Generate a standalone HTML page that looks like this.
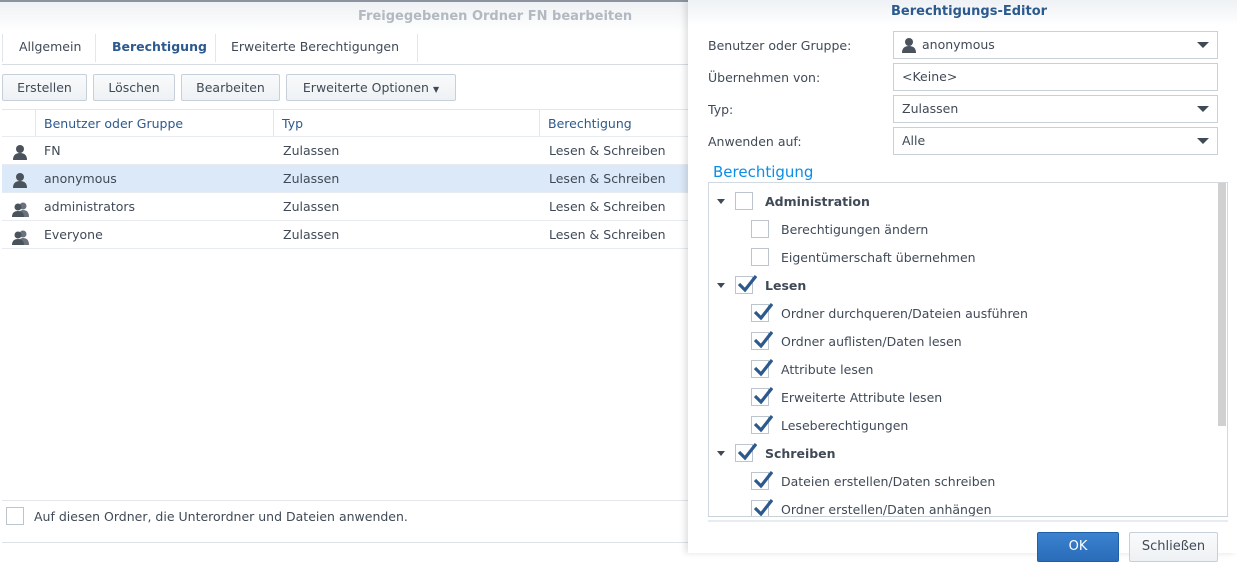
<!DOCTYPE html>
<html><head><meta charset="utf-8"><style>
*{box-sizing:border-box;margin:0;padding:0}
body{width:1237px;height:553px;overflow:hidden;background:#fff;font-family:"DejaVu Sans","Liberation Sans",sans-serif;font-size:12px;color:#404a57;position:relative}
.abs{position:absolute}
.btn{position:absolute;top:74px;height:27px;border:1px solid #c7d0da;border-radius:2px;background:linear-gradient(#f9fafb,#eef1f4);line-height:25px;text-align:center;font-size:12.5px;color:#404a57}
.row{position:absolute;left:2px;width:686px;height:28px;border-bottom:1px solid #e8ecf0;line-height:27px;font-size:12.5px}
.row span{position:absolute}
.fld{position:absolute;left:893px;width:325px;height:28px;border:1px solid #c8d0da;line-height:26px;padding-left:8px;font-size:12.5px}
.lbl{position:absolute;left:708px;font-size:12.5px}
.arr{position:absolute;right:8px;top:10px;width:0;height:0;border-left:6px solid transparent;border-right:6px solid transparent;border-top:6px solid #404a57}
.cb{position:absolute;width:18px;height:18px;border:1px solid #bcc4ce;background:#fff}
.cb svg{position:absolute;left:1px;top:-3px}
.tri{position:absolute;width:0;height:0;border-left:4px solid transparent;border-right:4px solid transparent;border-top:5px solid #404a57}
.t{position:absolute;font-size:12.5px}
</style></head><body>
<!-- left -->
<div class="abs" style="left:0;top:0;width:688px;height:2px;background:#8b949e"></div>
<div class="abs" style="left:0;top:2px;width:688px;height:30px;background:linear-gradient(#eef1f4,#fff)"></div>
<div class="abs" style="left:358px;top:9px;font-weight:bold;font-size:13px;color:#b3b9c0">Freigegebenen Ordner FN bearbeiten</div>
<div class="abs" style="left:2px;top:34px;height:28px;width:1px;background:#e3e7eb"></div>
<div class="abs" style="left:19px;top:39px;font-size:12.5px">Allgemein</div>
<div class="abs" style="left:95px;top:34px;height:28px;width:1px;background:#e3e7eb"></div>
<div class="abs" style="left:112px;top:39px;font-size:12.5px;font-weight:bold;color:#2c5a8e">Berechtigung</div>
<div class="abs" style="left:215px;top:34px;height:28px;width:1px;background:#e3e7eb"></div>
<div class="abs" style="left:231px;top:39px;font-size:12.5px">Erweiterte Berechtigungen</div>
<div class="abs" style="left:417px;top:34px;height:28px;width:1px;background:#e3e7eb"></div>
<div class="abs" style="left:2px;top:64px;width:686px;height:1px;background:#d8dde3"></div>
<div class="btn" style="left:2px;width:85px">Erstellen</div>
<div class="btn" style="left:93px;width:82px">Löschen</div>
<div class="btn" style="left:181px;width:99px">Bearbeiten</div>
<div class="btn" style="left:286px;width:170px">Erweiterte Optionen <span style="font-size:8px">▼</span></div>
<div class="row" style="top:109px;border-top:1px solid #e3e7eb;color:#2c5a8e">
<span style="left:33px;top:0;height:27px;border-left:1px solid #e3e7eb"></span><span style="left:42px">Benutzer oder Gruppe</span>
<span style="left:271px;top:0;height:27px;border-left:1px solid #e3e7eb"></span><span style="left:280px">Typ</span>
<span style="left:537px;top:0;height:27px;border-left:1px solid #e3e7eb"></span><span style="left:546px">Berechtigung</span></div>
<div class="row" style="top:137px"><span style="left:10px;top:5px"><svg width="16" height="16"><circle cx="8" cy="5" r="4" fill="#4a525c"/><path d="M1 16 Q1 9 8 9 Q15 9 15 16Z" fill="#4a525c"/></svg></span><span style="left:42px">FN</span><span style="left:281px">Zulassen</span><span style="left:547px">Lesen &amp; Schreiben</span></div>
<div class="row" style="top:165px;background:#dce9f8"><span style="left:10px;top:5px"><svg width="16" height="16"><circle cx="8" cy="5" r="4" fill="#4a525c"/><path d="M1 16 Q1 9 8 9 Q15 9 15 16Z" fill="#4a525c"/></svg></span><span style="left:42px">anonymous</span><span style="left:281px">Zulassen</span><span style="left:547px">Lesen &amp; Schreiben</span></div>
<div class="row" style="top:193px"><span style="left:10px;top:6px"><svg width="17" height="15"><circle cx="11" cy="4" r="3.5" fill="#6a727c"/><path d="M6 15 Q6 8 11 8 Q17 8 17 15Z" fill="#6a727c"/><circle cx="6" cy="5" r="3.5" fill="#4a525c"/><path d="M0 15 Q0 9 6 9 Q12 9 12 15Z" fill="#4a525c"/></svg></span><span style="left:42px">administrators</span><span style="left:281px">Zulassen</span><span style="left:547px">Lesen &amp; Schreiben</span></div>
<div class="row" style="top:221px"><span style="left:10px;top:6px"><svg width="17" height="15"><circle cx="11" cy="4" r="3.5" fill="#6a727c"/><path d="M6 15 Q6 8 11 8 Q17 8 17 15Z" fill="#6a727c"/><circle cx="6" cy="5" r="3.5" fill="#4a525c"/><path d="M0 15 Q0 9 6 9 Q12 9 12 15Z" fill="#4a525c"/></svg></span><span style="left:42px">Everyone</span><span style="left:281px">Zulassen</span><span style="left:547px">Lesen &amp; Schreiben</span></div>
<div class="abs" style="left:2px;top:500px;width:686px;height:1px;background:#e3e7eb"></div>
<div class="cb" style="left:6px;top:507px"></div>
<div class="abs" style="left:34px;top:509px;font-size:12.5px">Auf diesen Ordner, die Unterordner und Dateien anwenden.</div>
<div class="abs" style="left:2px;top:542px;width:686px;height:1px;background:#dde2e7"></div>
<!-- right dialog -->
<div class="abs" style="left:688px;top:0;width:549px;height:553px;background:#fff;box-shadow:-3px 0 6px rgba(0,0,0,.12)"></div>
<div class="abs" style="left:688px;top:0;width:549px;height:26px;background:linear-gradient(#eef1f5,#fff)"></div>
<div class="abs" style="left:891px;top:4px;font-weight:bold;font-size:13px;color:#2c5a8e">Berechtigungs-Editor</div>
<div class="lbl" style="top:38px">Benutzer oder Gruppe:</div>
<div class="fld" style="top:31px;padding-left:28px"><svg class="abs" style="left:7px;top:5px" width="16" height="16"><circle cx="8" cy="5" r="4" fill="#4a525c"/><path d="M1 16 Q1 9 8 9 Q15 9 15 16Z" fill="#4a525c"/></svg>anonymous<div class="arr"></div></div>
<div class="lbl" style="top:70px">Übernehmen von:</div>
<div class="fld" style="top:63px">&lt;Keine&gt;</div>
<div class="lbl" style="top:102px">Typ:</div>
<div class="fld" style="top:95px">Zulassen<div class="arr"></div></div>
<div class="lbl" style="top:134px">Anwenden auf:</div>
<div class="fld" style="top:127px">Alle<div class="arr"></div></div>
<div class="abs" style="left:713px;top:163px;font-size:15px;color:#0a8ee6">Berechtigung</div>
<div class="abs" style="left:708px;top:182px;width:520px;height:334px;border:1px solid #d3d9e0;border-bottom:none;overflow:hidden">
<div class="abs" style="left:509px;top:0;width:8px;height:243px;background:#d0d0d0"></div>
</div>
<div class="abs" style="left:708px;top:516px;width:520px;height:1px;background:#c8d0d8"></div>
<div class="abs" style="left:708px;top:520px;width:520px;height:2px;background:#e8ecf0"></div>
<div id="tree"></div>
<div class="abs" style="left:1037px;top:532px;width:82px;height:30px;border:1px solid #1f5fa8;border-radius:2px;background:linear-gradient(#3b82d0,#2a6cb8);color:#fff;text-align:center;line-height:28px;font-size:13px">OK</div>
<div class="abs" style="left:1129px;top:532px;width:89px;height:30px;border:1px solid #c7d0da;border-radius:2px;background:linear-gradient(#f9fafb,#eef1f4);text-align:center;line-height:28px;font-size:13px">Schließen</div>
<svg width="0" height="0"><defs><symbol id="ck" viewBox="0 0 20 20"><path d="M2 10 L8 16 L19 2" stroke="#2c5a8e" stroke-width="3.2" fill="none"/></symbol></defs></svg>
<!-- tree rows -->
<div class="tri" style="left:717px;top:199px"></div><div class="cb" style="left:735px;top:192px"></div><div class="t" style="left:765px;top:194px;font-weight:bold">Administration</div>
<div class="cb" style="left:751px;top:220px"></div><div class="t" style="left:781px;top:222px">Berechtigungen ändern</div>
<div class="cb" style="left:751px;top:248px"></div><div class="t" style="left:781px;top:250px">Eigentümerschaft übernehmen</div>
<div class="tri" style="left:717px;top:283px"></div><div class="cb" style="left:735px;top:276px"><svg width="20" height="20"><use href="#ck"/></svg></div><div class="t" style="left:765px;top:278px;font-weight:bold">Lesen</div>
<div class="cb" style="left:751px;top:304px"><svg width="20" height="20"><use href="#ck"/></svg></div><div class="t" style="left:781px;top:306px">Ordner durchqueren/Dateien ausführen</div>
<div class="cb" style="left:751px;top:332px"><svg width="20" height="20"><use href="#ck"/></svg></div><div class="t" style="left:781px;top:334px">Ordner auflisten/Daten lesen</div>
<div class="cb" style="left:751px;top:360px"><svg width="20" height="20"><use href="#ck"/></svg></div><div class="t" style="left:781px;top:362px">Attribute lesen</div>
<div class="cb" style="left:751px;top:388px"><svg width="20" height="20"><use href="#ck"/></svg></div><div class="t" style="left:781px;top:390px">Erweiterte Attribute lesen</div>
<div class="cb" style="left:751px;top:416px"><svg width="20" height="20"><use href="#ck"/></svg></div><div class="t" style="left:781px;top:418px">Leseberechtigungen</div>
<div class="tri" style="left:717px;top:451px"></div><div class="cb" style="left:735px;top:444px"><svg width="20" height="20"><use href="#ck"/></svg></div><div class="t" style="left:765px;top:446px;font-weight:bold">Schreiben</div>
<div class="cb" style="left:751px;top:472px"><svg width="20" height="20"><use href="#ck"/></svg></div><div class="t" style="left:781px;top:474px">Dateien erstellen/Daten schreiben</div>
<div class="abs" style="left:709px;top:496px;width:508px;height:20px;overflow:hidden">
<div class="cb" style="left:42px;top:4px"><svg width="20" height="20"><use href="#ck"/></svg></div><div class="t" style="left:72px;top:6px">Ordner erstellen/Daten anhängen</div></div>
</body></html>
